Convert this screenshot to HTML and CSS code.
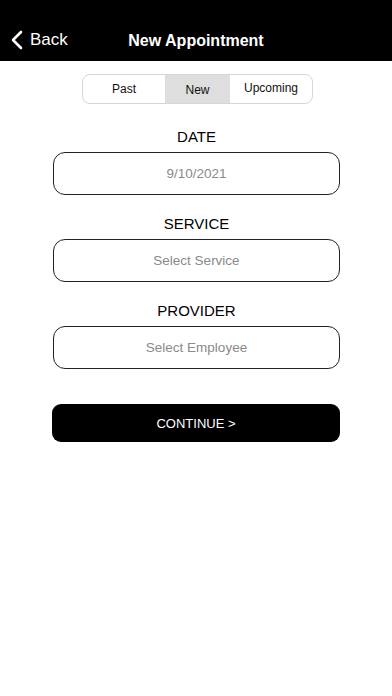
FILE: index.html
```html
<!DOCTYPE html>
<html lang="en">
<head>
    <meta charset="UTF-8">
    <meta name="viewport" content="width=device-width, initial-scale=1.0">
    <title>New Appointment</title>
    <link rel="stylesheet" href="styles.css">
</head>
<body>
    <header class="nav-bar">
        <a href="#" class="back-link">
            <svg class="chevron" width="12" height="20" viewBox="0 0 12 20">
                <path d="M10 2 L2 10 L10 18" fill="none" stroke="#fff" stroke-width="2.6" stroke-linecap="round" stroke-linejoin="round"/>
            </svg>
            <span>Back</span>
        </a>
        <h1 class="nav-title">New Appointment</h1>
    </header>

    <div class="tabs">
        <div class="tab tab-past">Past</div>
        <div class="tab tab-new active">New</div>
        <div class="tab tab-upcoming">Upcoming</div>
    </div>

    <form class="appointment-form">
        <div class="form-group">
            <label>DATE</label>
            <div class="field">9/10/2021</div>
        </div>
        <div class="form-group">
            <label>SERVICE</label>
            <div class="field">Select Service</div>
        </div>
        <div class="form-group">
            <label>PROVIDER</label>
            <div class="field">Select Employee</div>
        </div>
        <button type="button" class="continue-btn">CONTINUE &gt;</button>
    </form>
</body>
</html>
```

FILE: styles.css
```css
* {
    margin: 0;
    padding: 0;
    box-sizing: border-box;
    font-family: 'Liberation Sans', Arial, sans-serif;
}
body {
    background-color: #fff;
    color: #000;
    width: 392px;
    height: 696px;
}
.nav-bar {
    background-color: #000;
    height: 61px;
    position: relative;
    display: flex;
    align-items: center;
    justify-content: center;
    padding-top: 20px;
}
.back-link {
    position: absolute;
    left: 11px;
    top: 30px;
    display: flex;
    align-items: center;
    gap: 7px;
    color: #fff;
    text-decoration: none;
    font-size: 17px;
}
.nav-title {
    color: #fff;
    font-size: 16px;
    font-weight: bold;
}
.tabs {
    display: flex;
    width: 231px;
    height: 30px;
    margin: 13px 0 0 82px;
    border: 1px solid #d6d6d6;
    border-radius: 8px;
    overflow: hidden;
}
.tab {
    display: flex;
    align-items: center;
    justify-content: center;
    font-size: 12px;
    color: #111;
}
.tab-past {
    width: 82px;
}
.tab-new {
    width: 65px;
    padding-top: 1px;
}
.tab-upcoming {
    flex: 1;
    padding-bottom: 2px;
}
.tab.active {
    background-color: #dedede;
}
.appointment-form {
    padding: 0 52px 0 53px;
    margin-top: 23px;
}
.form-group {
    display: flex;
    flex-direction: column;
    align-items: center;
    margin-bottom: 19px;
}
label {
    display: block;
    font-size: 15px;
    line-height: 20px;
    margin-bottom: 5px;
}
.field {
    width: 100%;
    height: 43px;
    border: 1px solid #222;
    border-radius: 12px;
    display: flex;
    align-items: center;
    justify-content: center;
    color: #8a8a8a;
    font-size: 13.5px;
}
.continue-btn {
    display: block;
    width: 288px;
    height: 38px;
    margin: 35px 0 0 -1px;
    background-color: #000;
    color: #fff;
    border: none;
    border-radius: 9px;
    font-size: 13px;
}
```
